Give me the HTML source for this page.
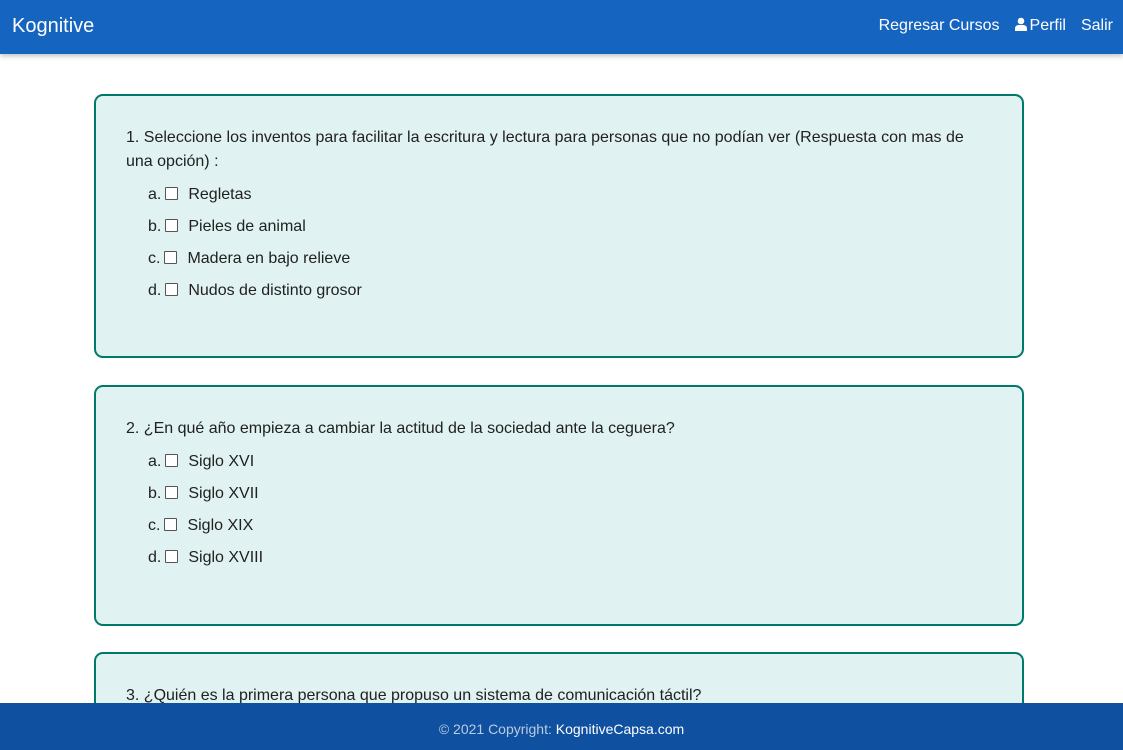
<!DOCTYPE html>
<html><head><meta charset="utf-8"><style>
*{box-sizing:border-box;margin:0;padding:0}
html,body{width:1123px;height:750px;overflow:hidden}
body{background:#fff;font-family:"Liberation Sans",Arial,sans-serif;color:#212121;position:relative}
.nav{position:absolute;left:0;top:0;width:1123px;height:54px;background:#1565c0;box-shadow:0 2px 5px rgba(0,0,0,.25);color:#fff;z-index:2}
.brand{position:absolute;left:12px;top:15px;font-size:20px}
.links{position:absolute;right:10px;top:17px;font-size:16px;display:flex;gap:15px;align-items:center}
.card{position:absolute;left:94px;width:930px;border:2px solid #00796b;border-radius:9px;background:#e0f2f1;font-size:16px}
.q{position:absolute;left:30px;line-height:24px;width:850px}
.opt{position:absolute;left:52px;height:20px;line-height:20px;white-space:nowrap}
.cb{display:inline-block;width:13px;height:13px;border:1px solid #555;background:#fff;margin:0 10px 0 4px;border-radius:1px;vertical-align:-1px}
.foot{position:absolute;left:0;top:703px;width:1123px;height:47px;background:#0f50a0;color:#bbcbe0;font-size:14px;text-align:center;line-height:52px;z-index:3}
.foot b{color:#fff;font-weight:normal}
</style></head><body>
<div class="nav"><div class="brand">Kognitive</div>
<div class="links"><span>Regresar Cursos</span><span><svg width="12" height="14" viewBox="0 0 12 14" style="vertical-align:-1px;margin-right:3px"><circle cx="6" cy="4" r="3.3" fill="#fff"/><path d="M0 14v-2.5C0 9 2 8 4 8h4c2 0 4 1 4 3.5V14z" fill="#fff"/></svg>Perfil</span><span>Salir</span></div></div>

<div class="card" style="top:94px;height:264px">
<div class="q" style="top:30px">1. Seleccione los inventos para facilitar la escritura y lectura para personas que no podían ver (Respuesta con mas de una opción) :</div>
<div class="opt" style="top:89px">a.<span class="cb"></span>Regletas</div>
<div class="opt" style="top:121px">b.<span class="cb"></span>Pieles de animal</div>
<div class="opt" style="top:153px">c.<span class="cb"></span>Madera en bajo relieve</div>
<div class="opt" style="top:185px">d.<span class="cb"></span>Nudos de distinto grosor</div>
</div>

<div class="card" style="top:385px;height:241px">
<div class="q" style="top:30px">2. ¿En qué año empieza a cambiar la actitud de la sociedad ante la ceguera?</div>
<div class="opt" style="top:65px">a.<span class="cb"></span>Siglo XVI</div>
<div class="opt" style="top:97px">b.<span class="cb"></span>Siglo XVII</div>
<div class="opt" style="top:129px">c.<span class="cb"></span>Siglo XIX</div>
<div class="opt" style="top:161px">d.<span class="cb"></span>Siglo XVIII</div>
</div>

<div class="card" style="top:652px;height:90px">
<div class="q" style="top:30px">3. ¿Quién es la primera persona que propuso un sistema de comunicación táctil?</div>
</div>

<div class="foot">© 2021 Copyright: <b>KognitiveCapsa.com</b></div>
</body></html>
